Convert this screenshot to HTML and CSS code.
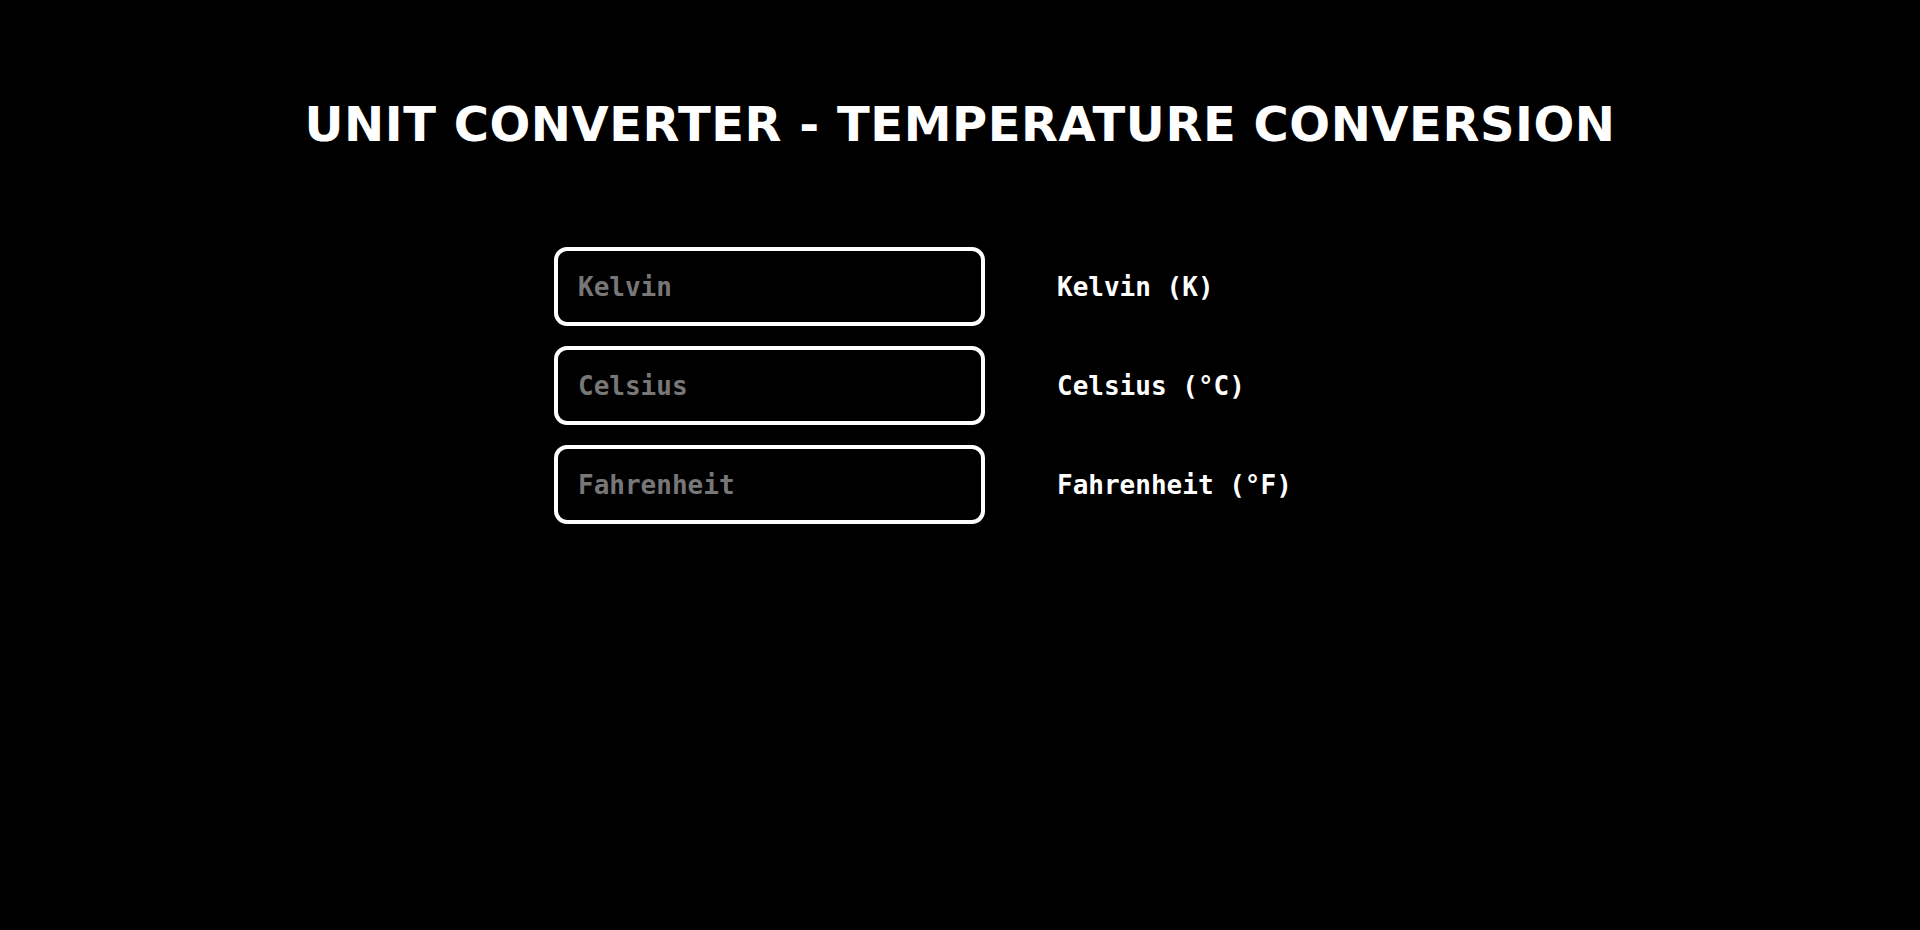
FILE: index.html
```html
<!DOCTYPE html>
<html lang="en">
<head>
<meta charset="utf-8">
<title>Unit Converter - Temperature Conversion</title>
<link rel="stylesheet" href="styles.css">
</head>
<body>
<main class="page">
  <h1 class="title">UNIT CONVERTER - TEMPERATURE CONVERSION</h1>
  <div class="converter">
    <input class="field" type="text" placeholder="Kelvin">
    <label class="unit">Kelvin (K)</label>
    <input class="field" type="text" placeholder="Celsius">
    <label class="unit">Celsius (°C)</label>
    <input class="field" type="text" placeholder="Fahrenheit">
    <label class="unit">Fahrenheit (°F)</label>
  </div>
</main>
</body>
</html>
```
FILE: styles.css
```css
html, body {
  margin: 0;
  padding: 0;
  background: #000;
  color: #fff;
}

.page {
  padding-top: 96px;
}

.title {
  margin: 0;
  text-align: center;
  font-family: "DejaVu Sans", Verdana, sans-serif;
  font-weight: bold;
  font-size: 48px;
  line-height: 56px;
  letter-spacing: 0.55px;
  color: #fff;
}

.converter {
  width: 812px;
  margin: 95px auto 0;
  display: grid;
  grid-template-columns: 431px 1fr;
  column-gap: 72px;
  row-gap: 20px;
  align-items: center;
}

.field {
  box-sizing: border-box;
  height: 79px;
  width: 431px;
  padding: 0 20px;
  background: #000;
  border: 4px solid #fff;
  border-radius: 13px;
  color: #fff;
  font-family: "DejaVu Sans Mono", Consolas, monospace;
  font-weight: bold;
  font-size: 26px;
  outline: none;
}

.field::placeholder {
  color: #777;
  opacity: 1;
}

.unit {
  font-family: "DejaVu Sans Mono", Consolas, monospace;
  font-weight: bold;
  font-size: 26px;
  color: #fff;
}
```
